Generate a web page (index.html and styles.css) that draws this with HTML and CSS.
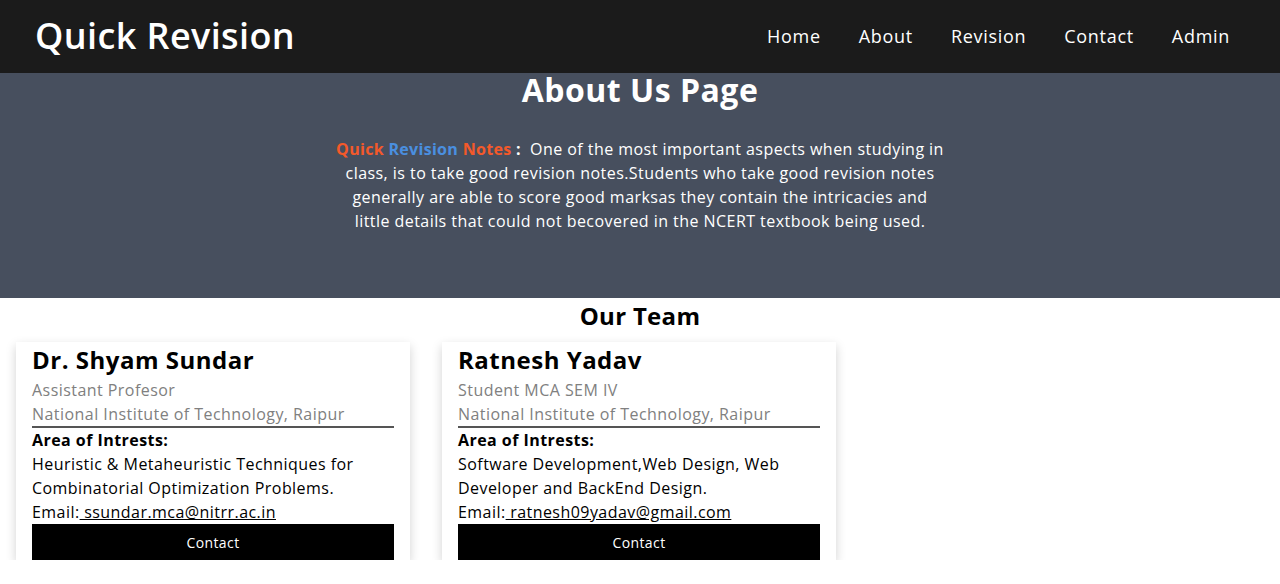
FILE: index.html
```html
<!DOCTYPE html>
<html lang="en">
<head>
<meta charset="utf-8">
<title>About Us - Quick Revision</title>
<link rel="stylesheet" href="styles.css">
</head>
<body>
<header class="navbar">
  <div class="logo">Quick Revision</div>
  <nav class="nav-links">
    <a href="#">Home</a>
    <a href="#">About</a>
    <a href="#">Revision</a>
    <a href="#">Contact</a>
    <a href="#">Admin</a>
  </nav>
</header>
<section class="hero">
  <h1 class="hero-title">About Us Page</h1>
  <p class="hero-text"><span class="brand orange">Quick</span> <span class="brand blue">Revision</span> <span class="brand orange">Notes</span><span class="brand"> :</span>&nbsp; One of the most important aspects when studying in class, is to take good revision notes.Students who take good revision notes generally are able to score good marksas they contain the intricacies and little details that could not becovered in the NCERT textbook being used.</p>
</section>
<section class="team">
  <h2 class="team-title">Our Team</h2>
  <div class="cards">
    <div class="card">
      <h3 class="name">Dr. Shyam Sundar</h3>
      <p class="muted">Assistant Profesor</p>
      <p class="muted inst">National Institute of Technology, Raipur</p>
      <p class="label">Area of Intrests:</p>
      <p class="text">Heuristic &amp; Metaheuristic Techniques for Combinatorial Optimization Problems.</p>
      <p class="text">Email:<a href="#"> ssundar.mca@nitrr.ac.in</a></p>
      <button class="btn">Contact</button>
    </div>
    <div class="card">
      <h3 class="name">Ratnesh Yadav</h3>
      <p class="muted">Student MCA SEM IV</p>
      <p class="muted inst">National Institute of Technology, Raipur</p>
      <p class="label">Area of Intrests:</p>
      <p class="text">Software Development,Web Design, Web Developer and BackEnd Design.</p>
      <p class="text">Email:<a href="#"> ratnesh09yadav@gmail.com</a></p>
      <button class="btn">Contact</button>
    </div>
  </div>
</section>
</body>
</html>
```
FILE: styles.css
```css
* { box-sizing: border-box; }
body {
  margin: 0;
  font-family: "Open Sans", "DejaVu Sans", sans-serif;
  letter-spacing: 0.45px;
  background: #fff;
  color: #000;
}
.navbar {
  height: 73px;
  background: #1b1b1b;
  display: flex;
  align-items: center;
  justify-content: space-between;
  padding: 0 50px 0 35px;
}
.logo {
  color: #fff;
  font-size: 36px;
  font-weight: 600;
  letter-spacing: 0.4px;
  line-height: 1;
  margin-top: -1px;
}
.nav-links {
  display: flex;
  gap: 38px;
  margin-top: -1px;
}
.nav-links a {
  color: #fff;
  text-decoration: none;
  font-size: 18px;
  font-weight: 500;
  letter-spacing: 0.7px;
}
.hero {
  background: #474f5e;
  height: 225px;
  display: flex;
  flex-direction: column;
  align-items: center;
  color: #fff;
}
.hero-title {
  margin: 0;
  font-size: 32px;
  font-weight: 700;
  line-height: 34px;
  letter-spacing: 0.5px;
}
.hero-text {
  margin: 30px 0 0;
  width: 610px;
  text-align: center;
  font-size: 16px;
  line-height: 24px;
}
.brand { font-weight: 700; letter-spacing: 0.3px; }
.orange { color: #f4592a; }
.blue { color: #4a8fe0; }
.team-title {
  margin: 0;
  text-align: center;
  font-size: 24px;
  font-weight: 700;
  line-height: 36px;
  letter-spacing: 0.3px;
}
.cards {
  display: flex;
  gap: 32px;
  padding: 8px 16px 0;
}
.card {
  width: 394px;
  padding: 0 16px;
  background: #fff;
  box-shadow: 0 4px 10px rgba(0,0,0,0.18);
}
.name {
  margin: 0;
  font-size: 24px;
  font-weight: 700;
  line-height: 36px;
  letter-spacing: 0.5px;
}
.card p {
  margin: 0;
  font-size: 16px;
  line-height: 24px;
}
.muted { color: #808080; }
.inst { border-bottom: 2px solid #555; }
.label { font-weight: 700; }
.text a { color: #000; }
.btn {
  display: block;
  width: 100%;
  height: 36px;
  border: 0;
  background: #000;
  color: #fff;
  font-family: inherit;
  font-size: 14px;
  letter-spacing: 0.4px;
}
```
